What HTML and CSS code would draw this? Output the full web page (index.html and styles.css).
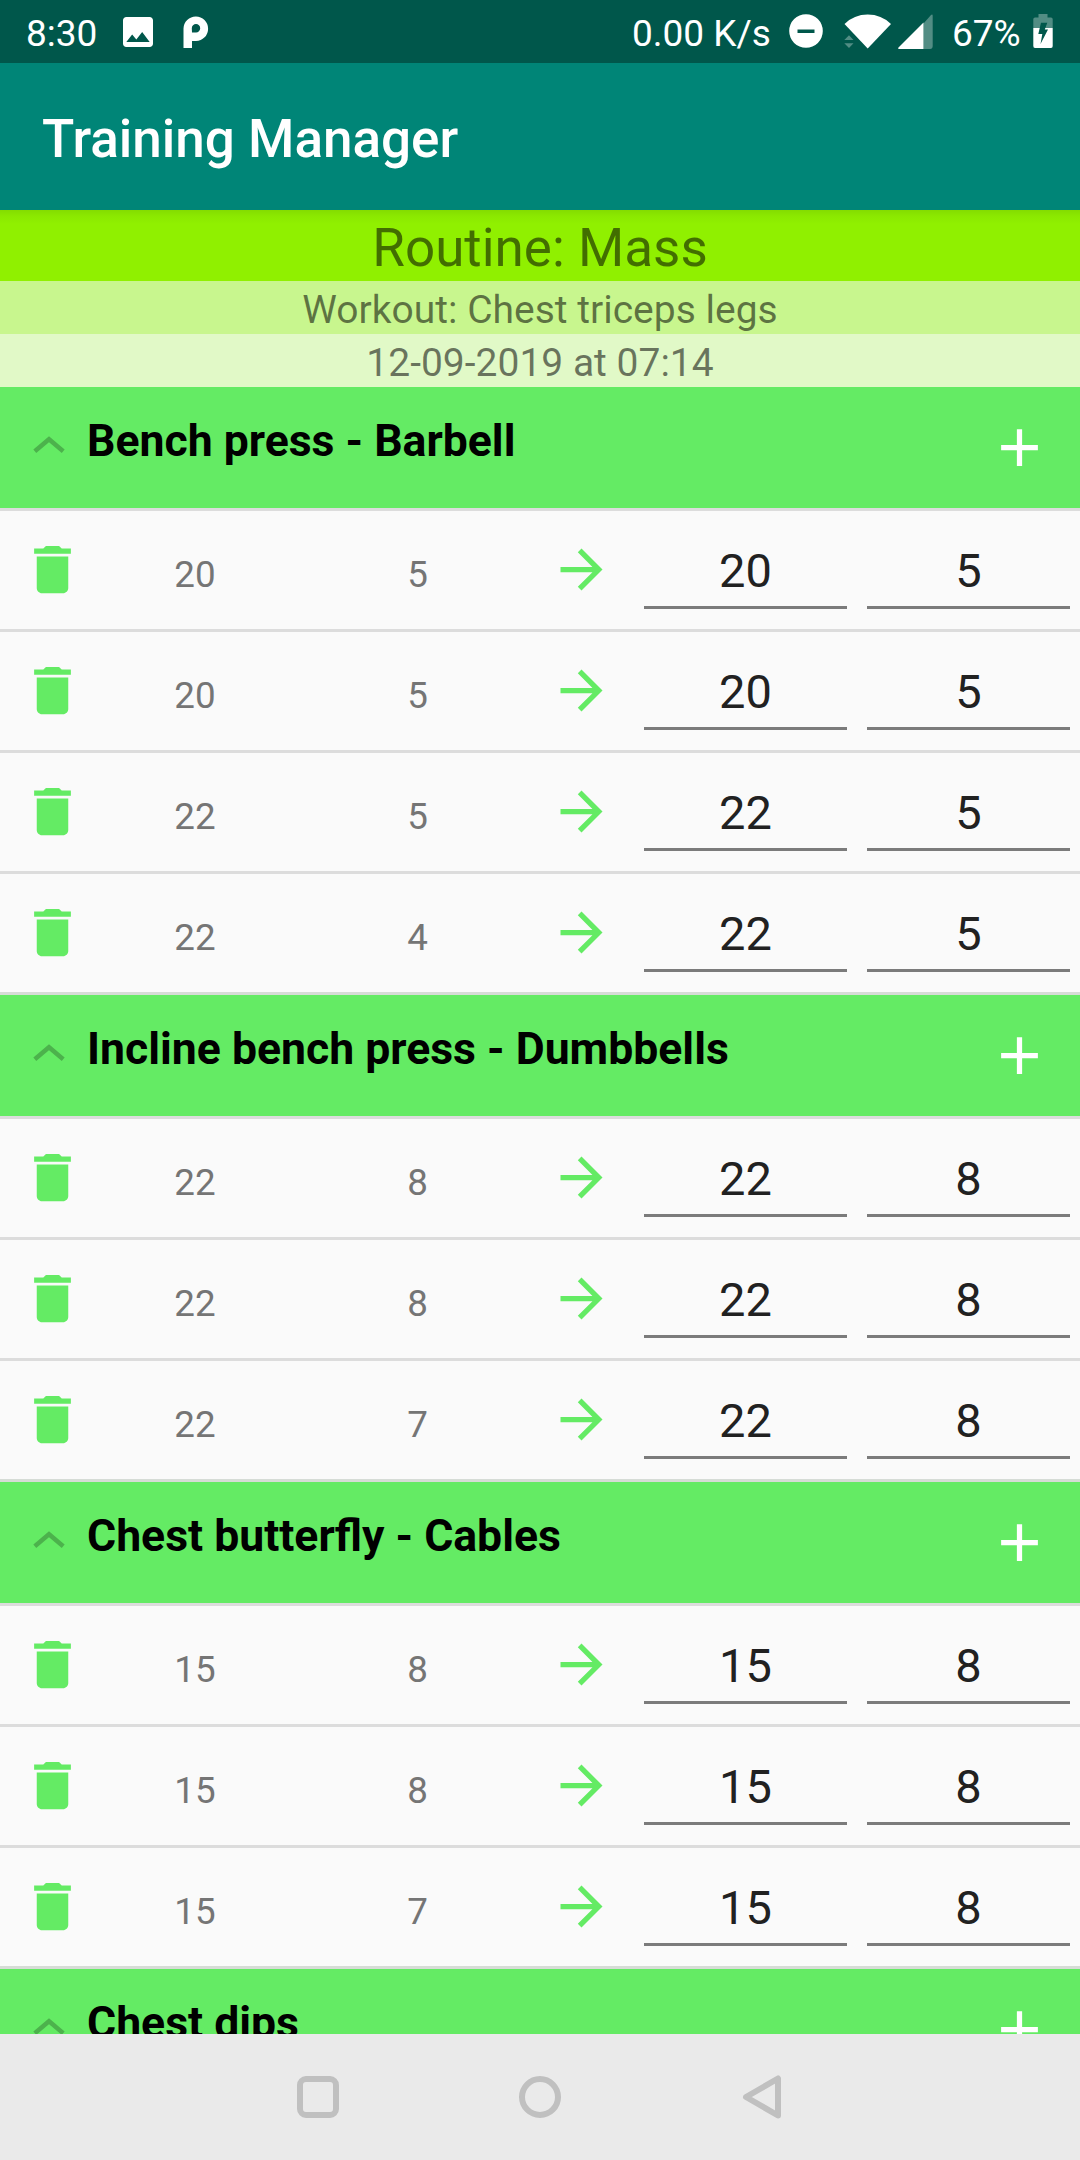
FILE: index.html
```html
<!DOCTYPE html>
<html lang="en">
<head>
<meta charset="utf-8">
<title>Training Manager</title>
<link rel="stylesheet" href="styles.css">
</head>
<body>
<svg class="defs" width="0" height="0">
  <symbol id="trash" viewBox="0 0 24 24"><path d="M6 19c0 1.100.9 2 2 2h8c1.100 0 2-.9 2-2V7H6v12zM19 4h-3.500l-1-1h-5l-1 1H5v2h14V4z"/></symbol>
  <symbol id="arrow" viewBox="0 0 24 24"><path d="M12 4l-1.410 1.410L16.170 11H4v2h12.170l-5.580 5.590L12 20l8-8z"/></symbol>
  <symbol id="plus" viewBox="0 0 24 24"><path d="M19 13h-6v6h-2v-6H5v-2h6V5h2v6h6v2z"/></symbol>
  <symbol id="chevron" viewBox="0 0 32 18"><path d="M1.800 15.200L16 3.300l14.200 11.900" fill="none" stroke="currentColor" stroke-width="4.500"/></symbol>
</svg>
<div class="screen">
  <div class="status">
    <span class="clock">8:30</span>
    <svg class="s-image" viewBox="3 3 18 18"><path d="M21 19V5c0-1.100-.9-2-2-2H5c-1.100 0-2 .9-2 2v14c0 1.100.9 2 2 2h14c1.100 0 2-.9 2-2zM8.500 13.500l2.500 3.010L14.500 12l4.500 6H5l3.500-4.500z"/></svg>
    <svg class="s-p" viewBox="0 0 26 32"><path fill-rule="evenodd" d="M0.500 32V12.500A12.300 12.300 0 1 1 13 25H9V32ZM9 16.500H13A4.200 4.200 0 1 0 8.800 12.300Z"/></svg>
    <span class="speed">0.00 K/s</span>
    <svg class="s-dnd" viewBox="0 0 34 34"><path fill-rule="evenodd" d="M17 .2A16.800 16.800 0 1 0 17 33.800A16.800 16.800 0 1 0 17 .2ZM8.500 15.500H25.500V19H8.500Z"/></svg>
    <svg class="s-wifi" viewBox="0 0 48 35"><path d="M.5 10Q10 .5 23.700 .5T47 10L23.700 34.500Z"/><path class="dim" d="M.3 26L5 21.300L9.500 26ZM.3 29.300H9.500L5 34Z"/></svg>
    <svg class="s-signal" viewBox="0 0 35 35"><path class="dim" d="M25.500 9.500L33 1Q34.700 -.3 34.700 2V32Q34.700 35 32 35H25.500Z"/><path d="M25.500 8.500V35H1Q-.5 34.500 .5 33.500Z"/></svg>
    <span class="pct">67%</span>
    <svg class="s-batt" viewBox="0 0 20 34"><path class="dim" d="M5.500 0H14.500V3.500H18Q19.700 3.500 19.700 5.200V14H.3V5.200Q.3 3.500 2 3.500H5.500Z"/><path d="M.3 14H19.700V32Q19.700 34 18 34H2Q.3 34 .3 32Z"/><path class="bolt" d="M8 8.700H14.300L11.800 15.500H15L7.500 30L9.300 20H5.300Z"/></svg>
  </div>
  <header class="appbar">Training Manager</header>
  <div class="routine">Routine: Mass</div>
  <div class="workout">Workout: Chest triceps legs</div>
  <div class="date">12-09-2019 at 07:14</div>
  <main class="list" id="list"></main>
  <nav class="nav">
    <svg class="n-icon" viewBox="0 0 44 44"><rect x="4" y="4" width="36" height="36" rx="6"/></svg>
    <svg class="n-icon" viewBox="0 0 44 44"><circle cx="22" cy="22" r="18"/></svg>
    <svg class="n-icon" viewBox="0 0 44 44"><path d="M6 22L38 3.500V40.500Z"/></svg>
  </nav>
</div>
<script src="app.js"></script>
</body>
</html>
```
FILE: app.js
```js
const exercises = [
  { name: "Bench press - Barbell", sets: [[20, 5, 20, 5], [20, 5, 20, 5], [22, 5, 22, 5], [22, 4, 22, 5]] },
  { name: "Incline bench press - Dumbbells", sets: [[22, 8, 22, 8], [22, 8, 22, 8], [22, 7, 22, 8]] },
  { name: "Chest butterfly - Cables", sets: [[15, 8, 15, 8], [15, 8, 15, 8], [15, 7, 15, 8]] },
  { name: "Chest dips", sets: [] }
];

const icon = (name) => `<svg class="icon ${name}"><use href="#${name}"/></svg>`;

const row = ([lastWeight, lastReps, weight, reps]) => `
  <div class="row">
    ${icon("trash")}
    <span class="last">${lastWeight}</span>
    <span class="last">${lastReps}</span>
    ${icon("arrow")}
    <span class="field">${weight}</span>
    <span class="field">${reps}</span>
  </div>`;

document.getElementById("list").innerHTML = exercises.map((e) => `
  <section class="group">
    <div class="head">${icon("chevron")}<h2 class="name">${e.name}</h2>${icon("plus")}</div>
    ${e.sets.map(row).join("")}
  </section>`).join("");
```
FILE: styles.css
```css
* { box-sizing: border-box; }

body {
  margin: 0;
  font-family: Roboto, "Liberation Sans", sans-serif;
  background: #fafafa;
}

svg { display: block; flex: none; fill: currentColor; }
.defs { position: absolute; }

.screen {
  width: 1080px;
  height: 2160px;
  display: flex;
  flex-direction: column;
  overflow: hidden;
}
.screen > * { flex: none; }

/* Status bar */
.status {
  height: 63px;
  display: flex;
  align-items: flex-start;
  background: #00574b;
  color: #fff;
  font-size: 37px;
  line-height: 67px;
  white-space: nowrap;
}
.clock { width: 97px; padding-left: 26px; }
.s-image { width: 30px; height: 30px; margin: 17px 30px 0 26px; }
.s-p { width: 26px; height: 32px; margin-top: 16px; }
.speed { margin-left: auto; width: 139px; }
.s-dnd { width: 34px; height: 34px; margin: 14px 0 0 18px; }
.s-wifi { width: 48px; height: 35px; margin: 14px 0 0 21px; }
.s-signal { width: 35px; height: 35px; margin: 14px 0 0 6px; }
.pct { width: 72px; margin-left: 19px; }
.s-batt { width: 20px; height: 34px; margin: 14px 27px 0 9px; }
.dim { opacity: .32; }
.bolt { fill: #00574b; }

.appbar {
  height: 147px;
  padding-left: 42px;
  background: #008577;
  color: #fff;
  font-size: 53px;
  font-weight: 500;
  line-height: 152px;
}

.routine, .workout, .date {
  text-align: center;
  color: rgba(0, 0, 0, .54);
  white-space: nowrap;
}
.routine {
  height: 71px;
  font-size: 53px;
  line-height: 76px;
  background: linear-gradient(#84dc00, #8be800 6px, #90f000 14px);
}
.workout, .date { height: 53px; font-size: 39px; line-height: 59px; }
.workout { background: #c8f68e; }
.date { background: #e1f9c7; }

/* Exercise list */
.list { height: 1647px; overflow: hidden; }
.group { border-bottom: 3px solid #d6dcd6; }
.head {
  height: 121px;
  display: flex;
  align-items: flex-start;
  padding: 0 29px 0 33px;
  background: #64eb64;
}
.name {
  flex: 1;
  margin: 0 0 0 22px;
  color: #000;
  font-size: 44.550px;
  font-weight: 700;
  line-height: 108px;
}
.icon { width: 63px; height: 63px; color: #64eb64; }
.chevron { width: 32px; height: 18px; margin-top: 49px; color: #4cb24c; }
.plus { margin-top: 29px; color: #fff; }

.row {
  height: 121px;
  border-top: 3px solid #dcdcdc;
  display: grid;
  grid-template-columns: 84px 222px 223px 115px 203px 203px;
  align-items: start;
}
.row .field:last-child { margin-left: 20px; margin-right: -20px; }
.trash { margin: 27px 0 0 21px; }
.arrow { margin: 27px 0 0 21px; }
.last {
  padding-top: 42px;
  color: #757575;
  font-size: 36.750px;
  line-height: 43px;
  text-align: center;
}
.field {
  height: 78px;
  margin-top: 20px;
  border-bottom: 3px solid #7b7b7b;
  color: #212121;
  font-size: 47px;
  line-height: 80px;
  text-align: center;
}

/* Navigation bar */
.nav {
  height: 126px;
  display: flex;
  justify-content: center;
  gap: 178px;
  padding-top: 41px;
  background: #eaeaea;
}
.n-icon {
  width: 44px;
  height: 44px;
  fill: none;
  stroke: #c0c0c0;
  stroke-width: 6;
  stroke-linejoin: round;
}
```
